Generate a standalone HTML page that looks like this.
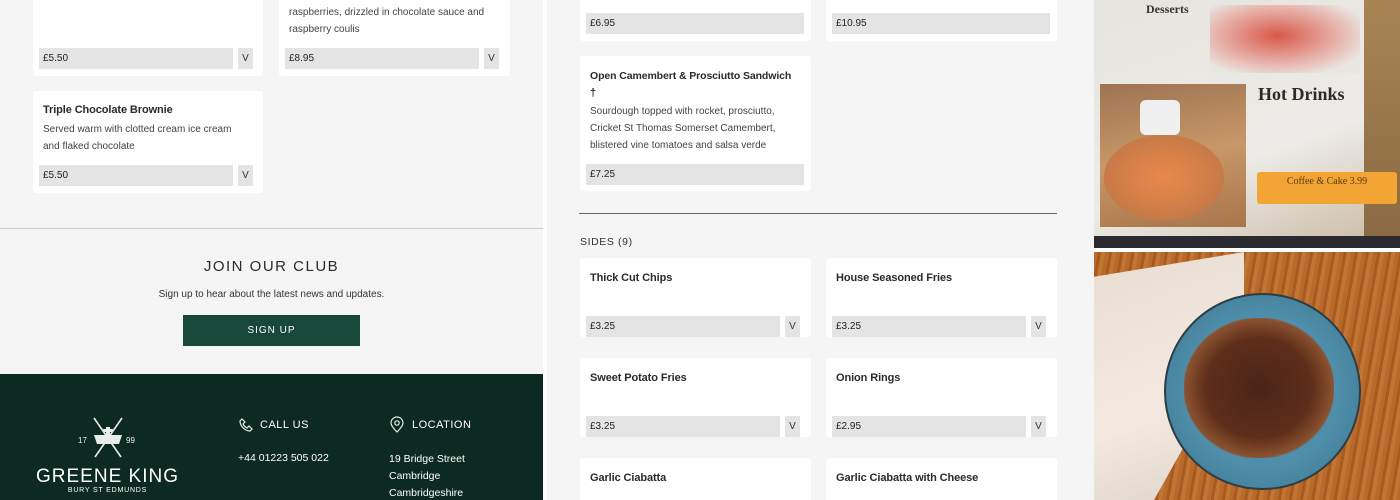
<!DOCTYPE html>
<html><head><meta charset="utf-8"><style>
*{margin:0;padding:0;box-sizing:border-box}
html,body{width:1400px;height:500px;overflow:hidden}
body{background:#f5f5f5;font-family:"Liberation Sans",sans-serif;color:#333;position:relative}
.a{position:absolute}
.card{position:absolute;background:#fff;border-radius:3px}
.t{position:absolute;font-size:11px;font-weight:bold;color:#2a2a2a;white-space:nowrap;letter-spacing:-0.1px}
.d{position:absolute;font-size:10px;color:#444;line-height:17px;white-space:nowrap}
.p{position:absolute;background:#e4e4e4;height:21px;font-size:10px;color:#222;line-height:21px;padding-left:4px}
.v{position:absolute;background:#e4e4e4;height:21px;width:15px;font-size:10px;color:#333;line-height:21px;text-align:center}
</style></head><body>
<div class="a" style="left:0;top:0;width:543px;height:374px;background:#f5f5f5"></div>
<div class="a" style="left:543px;top:0;width:4px;height:500px;background:#fff"></div>
<div class="card" style="left:33px;top:-5px;width:230px;height:81px"></div>
<div class="p" style="left:39px;top:48px;width:194px">£5.50</div><div class="v" style="left:238px;top:48px">V</div>
<div class="card" style="left:279px;top:-5px;width:231px;height:81px"></div>
<div class="d" style="left:289px;top:4px">raspberries, drizzled in chocolate sauce and<br>raspberry coulis</div>
<div class="p" style="left:285px;top:48px;width:194px">£8.95</div><div class="v" style="left:484px;top:48px">V</div>
<div class="card" style="left:33px;top:91px;width:230px;height:102px"></div>
<div class="t" style="left:43px;top:104px">Triple Chocolate Brownie</div>
<div class="d" style="left:43px;top:121px">Served warm with clotted cream ice cream<br>and flaked chocolate</div>
<div class="p" style="left:39px;top:165px;width:194px">£5.50</div><div class="v" style="left:238px;top:165px">V</div>
<div class="a" style="left:0;top:228px;width:543px;height:1px;background:#ccc"></div>
<div class="a" style="left:0;top:258px;width:543px;text-align:center;font-size:15px;letter-spacing:1.5px;color:#2a2a2a">JOIN OUR CLUB</div>
<div class="a" style="left:0;top:289px;width:543px;text-align:center;font-size:10px;color:#333">Sign up to hear about the latest news and updates.</div>
<div class="a" style="left:183px;top:315px;width:177px;height:31px;background:#17483a;color:#fff;font-size:10px;letter-spacing:1px;text-align:center;line-height:31px">SIGN UP</div>
<div class="a" style="left:0;top:374px;width:543px;height:126px;background:#0c2a21"></div>
<svg class="a" style="left:76px;top:415px" width="64" height="48" viewBox="0 0 64 48">
<g stroke="#e8ece9" stroke-width="1.6" fill="none"><path d="M18 3L45 42M46 3L19 42"/></g>
<path d="M18 20h28l-3 9H21z" fill="#e8ece9"/><path d="M30 12h4v8h-4zM27 14h10v3H27z" fill="#e8ece9"/>
<text x="2" y="28" font-size="8" fill="#e8ece9" font-family="Liberation Sans">17</text>
<text x="50" y="28" font-size="8" fill="#e8ece9" font-family="Liberation Sans">99</text>
</svg>
<div class="a" style="left:21px;top:466px;width:173px;text-align:center;font-size:19px;color:#fff;letter-spacing:1px;white-space:nowrap">GREENE KING</div>
<div class="a" style="left:21px;top:487px;width:173px;text-align:center;font-size:7px;color:#fff;letter-spacing:.8px;white-space:nowrap">BURY ST EDMUNDS</div>
<svg class="a" style="left:238px;top:417px" width="16" height="16" viewBox="0 0 16 16"><path d="M4 2l3 3-2 2c1 2 2 3 4 4l2-2 3 3-2 2C7 14 2 9 2 4z" fill="none" stroke="#e8ece9" stroke-width="1.2"/></svg>
<div class="a" style="left:260px;top:419px;font-size:11px;color:#fff;letter-spacing:.5px">CALL US</div>
<div class="a" style="left:238px;top:452px;font-size:10.5px;color:#fff">+44 01223 505 022</div>
<svg class="a" style="left:389px;top:416px" width="16" height="18" viewBox="0 0 16 18"><path d="M8 16C4 12 2 9 2 7a6 6 0 0112 0c0 2-2 5-6 9z" fill="none" stroke="#e8ece9" stroke-width="1.2"/><circle cx="8" cy="7" r="2.2" fill="none" stroke="#e8ece9" stroke-width="1.2"/></svg>
<div class="a" style="left:412px;top:419px;font-size:11px;color:#fff;letter-spacing:.5px">LOCATION</div>
<div class="a" style="left:389px;top:451px;font-size:10.5px;color:#fff;line-height:17px">19 Bridge Street<br>Cambridge<br>Cambridgeshire</div>
<div class="card" style="left:580px;top:-5px;width:231px;height:46px"></div>
<div class="p" style="left:586px;top:13px;width:218px">£6.95</div>
<div class="card" style="left:826px;top:-5px;width:231px;height:46px"></div>
<div class="p" style="left:832px;top:13px;width:218px">£10.95</div>
<div class="card" style="left:580px;top:56px;width:231px;height:135px"></div>
<div class="t" style="left:590px;top:70px;font-size:10.5px">Open Camembert &amp; Prosciutto Sandwich</div>
<div class="t" style="left:590px;top:87px">†</div>
<div class="d" style="left:590px;top:103px">Sourdough topped with rocket, prosciutto,<br>Cricket St Thomas Somerset Camembert,<br>blistered vine tomatoes and salsa verde</div>
<div class="p" style="left:586px;top:164px;width:218px">£7.25</div>
<div class="a" style="left:579px;top:213px;width:478px;height:1px;background:#666"></div>
<div class="a" style="left:580px;top:236px;font-size:10.5px;letter-spacing:.6px;color:#333">SIDES (9)</div>
<div class="card" style="left:580px;top:258px;width:231px;height:79px"></div>
<div class="t" style="left:590px;top:272px">Thick Cut Chips</div>
<div class="p" style="left:586px;top:316px;width:194px">£3.25</div><div class="v" style="left:785px;top:316px">V</div>
<div class="card" style="left:826px;top:258px;width:231px;height:79px"></div>
<div class="t" style="left:836px;top:272px">House Seasoned Fries</div>
<div class="p" style="left:832px;top:316px;width:194px">£3.25</div><div class="v" style="left:1031px;top:316px">V</div>
<div class="card" style="left:580px;top:358px;width:231px;height:79px"></div>
<div class="t" style="left:590px;top:372px">Sweet Potato Fries</div>
<div class="p" style="left:586px;top:416px;width:194px">£3.25</div><div class="v" style="left:785px;top:416px">V</div>
<div class="card" style="left:826px;top:358px;width:231px;height:79px"></div>
<div class="t" style="left:836px;top:372px">Onion Rings</div>
<div class="p" style="left:832px;top:416px;width:194px">£2.95</div><div class="v" style="left:1031px;top:416px">V</div>
<div class="card" style="left:580px;top:458px;width:231px;height:50px"></div>
<div class="t" style="left:590px;top:472px">Garlic Ciabatta</div>
<div class="card" style="left:826px;top:458px;width:231px;height:50px"></div>
<div class="t" style="left:836px;top:472px">Garlic Ciabatta with Cheese</div>
<div class="a" style="left:1094px;top:0;width:306px;height:500px;background:#fff;overflow:hidden">
<div class="a" style="left:0;top:0;width:306px;height:248px;background:linear-gradient(160deg,#e6e4de 0%,#ecebe7 60%,#c9b8a0 100%)"></div>
<div class="a" style="left:270px;top:0;width:36px;height:238px;background:linear-gradient(#a88453,#8a6a44)"></div>
<div class="a" style="left:116px;top:5px;width:150px;height:68px;background:radial-gradient(ellipse at 45% 45%,#d8584a,#e8b8b0 55%,#e9e6e2 80%)"></div>
<div class="a" style="left:6px;top:84px;width:146px;height:143px;background:linear-gradient(170deg,#9e7352,#c79868 50%,#a9744a)"></div>
<div class="a" style="left:46px;top:100px;width:40px;height:35px;background:#f0f0f0;border-radius:6px"></div>
<div class="a" style="left:10px;top:135px;width:120px;height:85px;background:radial-gradient(ellipse,#e9894a,#c77a48 70%,transparent 72%)"></div>
<div class="a" style="left:164px;top:84px;font-family:'Liberation Serif',serif;font-size:18px;font-weight:bold;color:#2a2a2a;white-space:nowrap">Hot Drinks</div>
<div class="a" style="left:52px;top:2px;font-family:'Liberation Serif',serif;font-size:12px;font-weight:bold;color:#333">Desserts</div>
<div class="a" style="left:163px;top:172px;width:140px;height:32px;background:#f2a435;border-radius:3px;font-family:'Liberation Serif',serif;font-size:10px;color:#5a3a10;text-align:center;line-height:20px;white-space:nowrap">Coffee &amp; Cake 3.99</div>
<div class="a" style="left:0;top:236px;width:306px;height:12px;background:#2a2a30"></div>
<div class="a" style="left:0;top:252px;width:306px;height:248px;background:repeating-linear-gradient(100deg,#b86a2a 0 4px,#a85a20 4px 7px,#c27634 7px 11px)"></div>
<div class="a" style="left:0;top:252px;width:150px;height:248px;background:linear-gradient(160deg,#e9ddd2,#f3e9e0 60%,#ddd4c8);clip-path:polygon(0 10%,100% 0,100% 35%,40% 100%,0 100%)"></div>
<div class="a" style="left:70px;top:293px;width:197px;height:197px;border-radius:50%;background:radial-gradient(circle,#4b8aa8 0%,#4f8fab 55%,#3a6f88 100%);border:2px solid #2d3d44"></div>
<div class="a" style="left:90px;top:318px;width:150px;height:140px;border-radius:45%;background:radial-gradient(ellipse,#4a2418 0%,#5e2e1a 50%,#8a5230 70%,transparent 72%)"></div>
</div>
</body></html>
